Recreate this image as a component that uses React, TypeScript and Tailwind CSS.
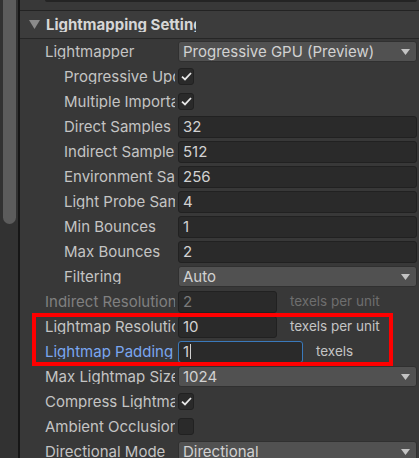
import React from "react";

type Row = {
  label: string;
  indent?: boolean;
  kind: "dropdown" | "check" | "field";
  value?: string;
  checked?: boolean;
  disabled?: boolean;
  focused?: boolean;
  fieldWidth?: string;
  suffix?: string;
};

const rows: Row[] = [
  { label: "Lightmapper", kind: "dropdown", value: "Progressive GPU (Preview)" },
  { label: "Progressive Updates", indent: true, kind: "check", checked: true },
  { label: "Multiple Importance Sampling", indent: true, kind: "check", checked: true },
  { label: "Direct Samples", indent: true, kind: "field", value: "32" },
  { label: "Indirect Samples", indent: true, kind: "field", value: "512" },
  { label: "Environment Samples", indent: true, kind: "field", value: "256" },
  { label: "Light Probe Sample Multiplier", indent: true, kind: "field", value: "4" },
  { label: "Min Bounces", indent: true, kind: "field", value: "1" },
  { label: "Max Bounces", indent: true, kind: "field", value: "2" },
  { label: "Filtering", indent: true, kind: "dropdown", value: "Auto" },
  { label: "Indirect Resolution", kind: "field", value: "2", disabled: true, fieldWidth: "w-[99px]", suffix: "texels per unit" },
  { label: "Lightmap Resolution", kind: "field", value: "10", fieldWidth: "w-[99px]", suffix: "texels per unit" },
  { label: "Lightmap Padding", kind: "field", value: "1", focused: true, fieldWidth: "w-[125px]", suffix: "texels" },
  { label: "Max Lightmap Size", kind: "dropdown", value: "1024" },
  { label: "Compress Lightmaps", kind: "check", checked: true },
  { label: "Ambient Occlusion", kind: "check", checked: false },
  { label: "Directional Mode", kind: "dropdown", value: "Directional" },
];

function Arrow() {
  return (
    <svg width="9" height="6" viewBox="0 0 9 6" className="absolute right-[6px] top-1/2 -translate-y-1/2">
      <path d="M0 0 H9 L4.5 6 Z" fill="#c4c4c4" />
    </svg>
  );
}

function Check({ checked }: { checked?: boolean }) {
  return (
    <div className="flex h-[17px] w-[16px] items-center justify-center rounded-[3px] border border-[#212121] bg-[#2a2a2a]">
      {checked && (
        <svg width="11" height="9" viewBox="0 0 11 9">
          <path d="M1 4.6 L4 7.4 L10 1" fill="none" stroke="#e6e6e6" strokeWidth="1.8" />
        </svg>
      )}
    </div>
  );
}

function Value({ row }: { row: Row }) {
  if (row.kind === "dropdown") {
    return (
      <div className="relative flex h-[21px] w-full items-center rounded-[3px] border border-[#303030] bg-[#515151] pl-[4px] text-[#d2d2d2]">
        {row.value}
        <Arrow />
      </div>
    );
  }
  if (row.kind === "check") return <Check checked={row.checked} />;
  return (
    <div className="flex w-full items-center">
      <div
        className={`flex h-[22px] ${row.fieldWidth ?? "w-full"} items-center rounded-[3px] border bg-[#2a2a2a] pl-[4px] ${
          row.focused ? "border-[#3a79bb]" : "border-[#212121]"
        } ${row.disabled ? "text-[#7a7a7a]" : "text-[#d2d2d2]"}`}
      >
        {row.value}
        {row.focused && <span className="ml-px inline-block h-[15px] w-px bg-[#d2d2d2]" />}
      </div>
      {row.suffix && (
        <span className={`ml-[13px] text-[13.5px] ${row.disabled ? "text-[#6e6e6e]" : "text-[#c4c4c4]"}`}>
          {row.suffix}
        </span>
      )}
    </div>
  );
}

export default function App() {
  return (
    <div
      className="relative flex h-[458px] w-[419px] overflow-hidden bg-[#383838] text-[15px] leading-none"
      style={{ fontFamily: "Inter, 'Noto Sans', sans-serif" }}
    >
      {/* scrollbar */}
      <div className="h-full w-[20px] shrink-0 border-r-2 border-[#161616] bg-[#323232] pl-[3px] pr-[2px]">
        <div className="h-[224px] w-[13px] rounded-b-full bg-[#5c5c5c]" />
      </div>

      <div className="flex min-w-0 flex-1 flex-col">
        <div className="h-[11px] shrink-0 border-b border-[#232323] pl-[25px] pr-[2px]">
          <div className="h-[2px] rounded-b-[3px] bg-[#242424]" />
        </div>
        <div className="flex h-[28px] shrink-0 items-center border-b border-[#262626] bg-[#3c3c3c]">
          <svg width="11" height="9" viewBox="0 0 11 9" className="ml-[9px] shrink-0">
            <path d="M0 0 H11 L5.5 9 Z" fill="#8a8a8a" />
          </svg>
          <div className="ml-[6px] w-[150px] overflow-hidden whitespace-nowrap font-bold text-[#d6d6d6]">
            Lightmapping Settings
          </div>
        </div>

        {rows.map((row) => (
          <div key={row.label} className="flex h-[25px] shrink-0 items-center pr-[2px]">
            <div
              className={`w-[158px] shrink-0 pr-[3px] ${row.indent ? "pl-[44px]" : "pl-[25px]"}`}
            >
              <div
                className={`overflow-hidden whitespace-nowrap ${
                  row.focused ? "text-[#7aa6f0]" : row.disabled ? "text-[#808080]" : "text-[#c4c4c4]"
                }`}
              >
                {row.label}
              </div>
            </div>
            <div className="flex min-w-0 flex-1 items-center">
              <Value row={row} />
            </div>
          </div>
        ))}
      </div>

      {/* annotation */}
      <div className="pointer-events-none absolute left-[32px] top-[313px] h-[53px] w-[361px] border-4 border-[#ff0000]" />
    </div>
  );
}
